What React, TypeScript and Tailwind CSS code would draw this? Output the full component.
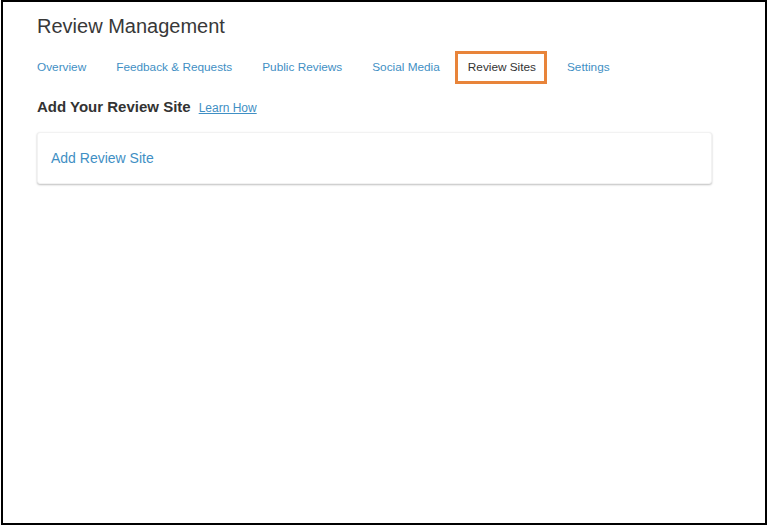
import React from 'react';

const tabs = ['Overview', 'Feedback & Requests', 'Public Reviews', 'Social Media', 'Review Sites', 'Settings'];
const activeTab = 'Review Sites';

export default function App() {
  return (
    <div className="w-[768px] h-[526px] bg-white" style={{ fontFamily: '"Liberation Sans", Arial, sans-serif' }}>
      <div className="ml-px w-[766px] h-[525px] border-2 border-black bg-white pl-[34px] pt-3">
        <h1 className="text-[20px] leading-6 text-[#383838]">Review Management</h1>

        <nav className="mt-[13px] flex items-center h-[33px]">
          {tabs.map((tab, i) => {
            const active = tab === activeTab;
            const prevActive = i > 0 && tabs[i - 1] === activeTab;
            return active ? (
              <div
                key={tab}
                className="h-[33px] flex items-center border-[3px] border-[#e8843a] pl-[10px] pr-[8px] text-[11.8px] text-[#333333]"
              >
                {tab}
              </div>
            ) : (
              <a
                key={tab}
                href="#"
                className={`h-[33px] flex items-center text-[11.8px] text-[#3f8fc4] ${i === 0 ? 'pr-[15px]' : prevActive ? 'pl-[20px] pr-[15px]' : 'px-[15px]'}`}
              >
                {tab}
              </a>
            );
          })}
        </nav>

        <div className="mt-[13px] h-5 flex items-baseline gap-2">
          <h2 className="text-[15px] font-bold text-[#333333] leading-5">Add Your Review Site</h2>
          <a href="#" className="text-[12px] text-[#3f8fc4] underline">Learn How</a>
        </div>

        <div className="mt-[15px] w-[675px] h-[52px] bg-white rounded-[3px] shadow-[0_1px_2px_rgba(0,0,0,0.25)] border border-[#f2f2f2] flex items-center px-[13px]">
          <a href="#" className="text-[14px] text-[#3f8fc4]">Add Review Site</a>
        </div>
      </div>
    </div>
  );
}
